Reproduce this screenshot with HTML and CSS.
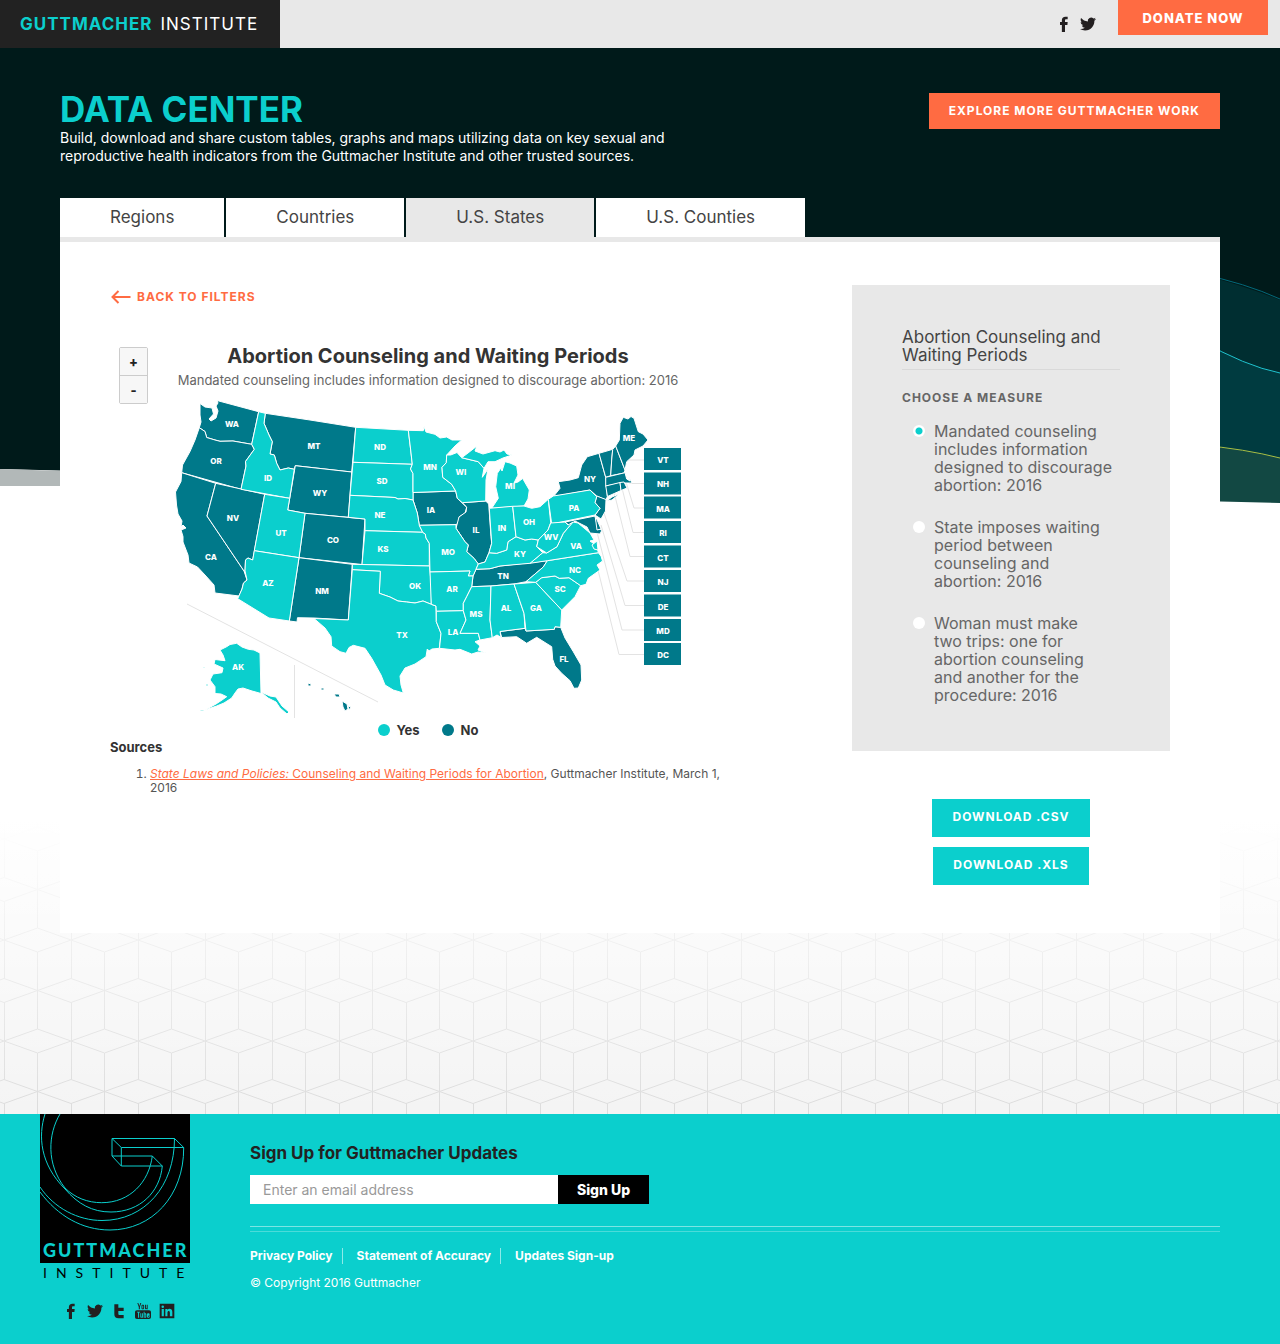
FILE: index.html
```html
<!DOCTYPE html>
<html lang="en">
<head>
<meta charset="utf-8">
<meta name="viewport" content="width=device-width, initial-scale=1">
<title>Data Center | Guttmacher Institute</title>
<link rel="stylesheet" href="styles.css">
</head>
<body>
<svg class="sprite" aria-hidden="true">
  <symbol id="facebook" viewBox="0 0 24 24"><path d="M17.500 1h-3.300C10.800 1 8.800 3 8.800 6.300V9H6v4.500h2.800V24h4.700V13.500h3.600l.4-4.500h-4V6.800c0-1.300.5-1.800 1.700-1.800h2.300z"/></symbol>
  <symbol id="twitter" viewBox="0 0 24 24"><path d="M23.953 4.570a10 10 0 01-2.825.775 4.958 4.958 0 002.163-2.723c-.951.555-2.005.959-3.127 1.184a4.920 4.920 0 00-8.384 4.482C7.690 8.095 4.067 6.130 1.640 3.162a4.822 4.822 0 00-.666 2.475c0 1.710.870 3.213 2.188 4.096a4.904 4.904 0 01-2.228-.616v.060a4.923 4.923 0 003.946 4.827 4.996 4.996 0 01-2.212.085 4.936 4.936 0 004.604 3.417 9.867 9.867 0 01-6.102 2.105c-.390 0-.779-.023-1.170-.067a13.995 13.995 0 007.557 2.209c9.053 0 13.998-7.496 13.998-13.985 0-.210 0-.420-.015-.630A9.935 9.935 0 0024 4.590z"/></symbol>
  <symbol id="tumblr" viewBox="0 0 24 24"><path d="M5 2h6v5h8v5h-8v4c0 1.600.8 2 2.200 2H19v5h-7.500C7 23 5 21 5 17z"/></symbol>
  <symbol id="youtube" viewBox="0 0 24 24"><path d="M5 0l1.500 4.500L8 0h1.500L7.300 6v3.500H5.700V6L3.500 0zM11.700 2.500c1.300 0 2 .8 2 2v3c0 1.300-.7 2-2 2s-2-.7-2-2v-3c0-1.200.7-2 2-2zm0 1.200c-.4 0-.6.300-.6.800v3c0 .5.200.8.6.8s.6-.3.600-.8v-3c0-.5-.2-.8-.6-.8zM15 2.700h1.400v4.800c0 .6.700.5 1.200-.1V2.700H19v6.700h-1.400v-.7c-1.100 1.200-2.600 1-2.600-.7z"/><path fill-rule="evenodd" d="M3 11h18c2 0 3 1 3 3v7c0 2-1 3-3 3H3c-2 0-3-1-3-3v-7c0-2 1-3 3-3zm0 2v1.400h1.600V22h1.500v-7.600h1.600V13zm5 2.500V21c0 1.400 1.500 1.400 2.500.3v.7h1.300v-6.500h-1.300v4.800c-.5.600-1.100.7-1.100 0v-4.800zM13 13v9h1.300v-.6c1.200 1.200 2.700.7 2.700-1.200v-3c0-1.700-1.500-2.300-2.700-1.100V13zm1.400 4.200c.5-.7 1.200-.5 1.200.3v2.700c0 .8-.7 1-1.200.4zM20 15.500c-1.300 0-2 .8-2 2v2.600c0 1.300.7 2 2 2s2-.8 2-2v-.6h-1.300v.7c0 .5-.3.700-.7.700s-.6-.3-.6-.8v-1H22v-1.600c0-1.200-.7-2-2-2z"/></symbol>
  <symbol id="linkedin" viewBox="0 0 24 24"><path fill-rule="evenodd" d="M1 1h22v22H1zm3 8v11h3.300V9zm1.600-5.200a1.900 1.900 0 100 3.800 1.900 1.900 0 000-3.800zM9.500 9v11h3.200v-5.700c0-3.300 3.600-3.300 3.600 0V20H20v-6.500c0-5.300-5.400-6-7.300-3V9z"/></symbol>
</svg>

<header class="topbar">
  <a class="brand" href="#"><strong>GUTTMACHER</strong> INSTITUTE</a>
  <nav class="topbar-actions" aria-label="Social and donations">
    <a class="social" href="#" aria-label="Facebook"><svg><use href="#facebook"/></svg></a>
    <a class="social" href="#" aria-label="Twitter"><svg><use href="#twitter"/></svg></a>
    <a class="donate" href="#">DONATE NOW</a>
  </nav>
</header>

<main class="page">
  <svg class="backdrop" viewBox="0 0 1280 456" preserveAspectRatio="none" aria-hidden="true">
    <path fill="#001a1a" d="M0 0H1280V454L0 421Z"/>
    <path fill="#b2b8b8" d="M0 421L64 423V438H0Z"/>
    <path fill="#002e31" d="M1200 226Q1245 238 1280 252V454L1200 452Z"/>
    <path fill="#003b40" d="M1200 292Q1245 318 1280 325V454L1200 452Z"/>
    <path fill="#124843" d="M1200 397Q1245 402 1280 410V455L1200 453Z"/>
    <path class="wave" stroke="#03697a" d="M1200 226Q1245 235 1280 251"/>
    <path class="wave" stroke="#1fc3cf" d="M1200 292Q1245 318 1280 325"/>
    <path class="wave" stroke="#a9bf45" d="M1200 397Q1245 401 1280 410"/>
  </svg>
  <svg class="lattice" aria-hidden="true">
    <defs>
      <pattern id="cubes" x="4" y="120" width="67" height="101" patternUnits="userSpaceOnUse">
        <path fill="none" stroke="#dcdcdc" d="M0 0L33.500 -12L67 0L33.500 12ZM0 101L33.500 89L67 101M0 38.500L33.500 50.500L0 62.500M67 38.500L33.500 50.500L67 62.500M33.500 12V89M.5 0V38.500M.5 62.500V101"/>
      </pattern>
      <linearGradient id="fade" x2="0" y2="1">
        <stop offset="0" stop-color="#fff"/>
        <stop offset="1" stop-color="#fff" stop-opacity="0"/>
      </linearGradient>
    </defs>
    <rect width="100%" height="100%" fill="#f4f4f4"/>
    <rect width="100%" height="100%" fill="url(#cubes)"/>
    <rect width="100%" height="100%" fill="url(#fade)"/>
  </svg>

  <div class="content">
    <div class="intro">
      <div>
        <h1>DATA CENTER</h1>
        <p>Build, download and share custom tables, graphs and maps utilizing data on key sexual and<br>reproductive health indicators from the Guttmacher Institute and other trusted sources.</p>
      </div>
      <a class="explore" href="#">EXPLORE MORE GUTTMACHER WORK</a>
    </div>

    <nav class="tabs" aria-label="Geography">
      <a href="#">Regions</a>
      <a href="#">Countries</a>
      <a href="#" class="active" aria-current="page">U.S. States</a>
      <a href="#">U.S. Counties</a>
    </nav>

    <div class="card">
      <section class="results">
        <a class="back" href="#"><svg viewBox="0 0 20 14"><path d="M20 7H2M8 1L2 7L8 13"/></svg>BACK TO FILTERS</a>
        <div class="chart">
          <div class="zoom">
            <button type="button" aria-label="Zoom in">+</button>
            <button type="button" aria-label="Zoom out">-</button>
          </div>
          <h2>Abortion Counseling and Waiting Periods</h2>
          <p class="subtitle">Mandated counseling includes information designed to discourage abortion: 2016</p>
          <svg class="map" viewBox="110 395 636 324" role="img" aria-label="Map of U.S. states">
            <g class="guides">
              <path d="M187 604L378 702M294.500 665V718"/>
              <path d="M644 460H612M644 483.500H629M644 508H634L626 482M644 532.500H633L622 488M644 556.500H630L614 492M644 581H627L603 510M644 605.500H625L601 525M644 630H622L596 528M644 654.500H619L590 538"/>
            </g>
            <g class="no">
              <path d="M200 403.500L205 407L212 408L213.500 414L209 419L211 421L216 418L218 411L216 406L218 403L217 400.500L258.700 411.700L251.700 444.300L233 441L220 441.300L215 440L206.700 437.500L205 431.500L199.300 427.700L201 422L200 415Z"/>
              <path d="M199.300 427.700L205 431.500L206.700 437.500L215 440L220 441.300L233 441L251.700 444.300L254.300 449.300L245.500 461.500L246 466L241 489.300L181.700 472.700L182.500 465L190 451.500L195 440Z"/>
              <path d="M181.700 472.700L215.700 483.300L207 516L244 571L247 580L243.500 583L242 589L239 596L215 593L214 585L205 575L197.500 567L189 563L188 555L183 542L183 536.500L181 530L186 528L183 525L181 527L182 521L178 514L176.500 505L175.500 492L181 481.500Z"/>
              <path d="M215.700 483.300L264.700 494.300L252.700 560L248 558L245.500 560L245 571L244 571L207 516Z"/>
              <path d="M265.300 413.300L310 420L355.700 427.300L351.700 472L295.300 465.700L294.300 469.300L288.300 468L280 470L276.700 463.300L274.300 455L270 454L272.300 441.700L269 435L264 423.300Z"/>
              <path d="M295.300 465.700L351.700 472L348.300 517.300L305 513.300L287.700 510Z"/>
              <path d="M305 513.300L365 519L362 564.500L299 557.700Z"/>
              <path d="M299 557.700L352.300 564.300L348.300 620L314 618L297.500 617.700L297 622L289.300 621Z"/>
              <path d="M413 492.500L455.700 491L457.300 498.300L466.700 507.300L465 513.300L459.300 516.700L458.700 522.700L456 524.700L419.300 525.300L417.300 513L413 500Z"/>
              <path d="M462.300 502.700L485.700 501L488.700 504L491 536.700L491.700 543.300L489 552.700L485 562L478.300 564L474 558.300L466.700 551.700L468.300 545L465 541.700L456 528.300L459 517L466 512L466.700 507Z"/>
              <path d="M476 569.300L490 568.700L500 566L547.300 560.700L543.300 567L526 581.700L514 584L491 586L471.700 586.700L473 576Z"/>
              <path d="M500 631.500L525 628.300L526 631L554.300 629.300L555 626.700L560.700 627.300L565 638L573.300 651.700L581 665L581.700 680L578.300 688L574 688.300L570 680.700L561.700 673.300L555 666L552.700 659.300L551.700 646.700L536.700 637.300L526.700 643.300L516.700 636.700L501.700 637.500Z"/>
              <path d="M553.300 496.700L560 488.300L558.300 481.700L570 480L578.300 477.700L581.700 465L587.300 456.700L599 453.300L605.700 477.300L607.300 496.700L606 500L596.700 496L590 490Z"/>
              <path d="M599 453.300L612.700 449.300L611.700 460L610.700 475.700L605.700 477.300Z"/>
              <path d="M612.700 449.300L615.700 446L625 470L624 473L610.700 475.700L611.700 460Z"/>
              <path d="M615.700 446L619.300 440L620 423.300L623.300 417.300L628 419L631 416.500L634 418.300L638.300 431.700L643 434L648 440L643 446L635 450L634 455L626.700 461.700L625 470Z"/>
              <path d="M605.700 477.300L625 472.700L626.700 479L630 481L629 477L632 483L621 483L605.700 486Z"/>
              <path d="M605.700 486L620 482.500L621 490.500L607.500 496.500Z"/>
              <path d="M620 482.500L624 482L627 488L621 490.500Z"/>
              <path d="M596.700 496L606 499.500L605.500 511L601 519L595 515L600 508.300L595 502.700Z"/>
              <path d="M565 522L595 516L598 529L602 530L600 534L590 533L587 527L575 521L570 526Z"/>
              <path d="M595 515L601 529L597 530Z"/>
              <path d="M606.700 501L612 497L619 494L612 500Z"/>
              <path d="M308 683l3 1v2h-3zM321 688h3v2h-3zM334 694h5l1 3h-4zM342 701l5 3 1 5-3 2-2-4zM348 706l3 1-2 3z"/>
            </g>
            <g class="yes">
              <path d="M258.700 411.700L265.300 413.300L264 423.300L269 435L272.300 441.700L270 454L274.300 455L276.700 463.300L280 470L288.300 468L294.300 469.300L289.700 498.300L241 489.300L246 466L245.500 461.500L254.300 449.300L251.700 444.300Z"/>
              <path d="M264.700 494.300L289.700 498.300L287.700 510L305 513.300L299 557.700L254.300 550.700Z"/>
              <path d="M254.300 550.700L299 557.700L289.300 621L269 618L237.700 598.700L242 589L243.500 583L247 580L245 571L245.500 560L248 558L252.700 560Z"/>
              <path d="M355.700 427.300L408.300 430.300L410.700 450L412.300 464.300L353 462.300Z"/>
              <path d="M353 462.300L412.300 464.300L410.500 469L413 473.500V492.500L413 500L405 498.500L398 499L395 497.500L350 495.300Z"/>
              <path d="M350 495.300L395 497.500L398 499L405 498.500L413 500L417.300 513L419.300 525.300L422.700 532.300L365 530.700V519L348.300 517.300Z"/>
              <path d="M365 530.700L422.700 532.300L425.300 534L426 538L429.300 543.300V566L362 564.500Z"/>
              <path d="M352.300 564.300L429.500 566L431.300 585V604.300L423 601L415 603L406.700 602L398 601L390 597L379.300 593.300L380.300 571.300L352.300 569.700Z"/>
              <path d="M352.300 569.700L380.300 571.300L379.300 593.300L390 597L398 601L406.700 602L415 603L423 601L431.300 604.300L436 606L436.300 621.700L441 633.300L439.300 648.300L432 649L429 651L427.300 649L426 656.700L415 664L405 668L400 676L401 685L403.300 693L393.300 690L385 685L381 675L371.700 658.300L365 648.300L353.300 645.300L349 647.500L346 653.300L340 651.700L331.700 646L331 636.700L325 628L314 618.500L348.300 620Z"/>
              <path d="M408.300 430.300L423.300 430.700L424 426.500L426 432L435 434.300L440 438L446.700 437L452 440L461.700 440L455 446L446.700 455L446.300 462.700L442 467.300L442.700 477.300L451.700 484.300L455.700 491L413 492.500V473.500L410.500 469L412.300 464.300L410.700 450Z"/>
              <path d="M446.700 455L450.700 455L457 452.500L461.700 457.700L478.300 461.700L484 468.300L482.300 477.300L488 469L486 480L485.700 501L462.300 502.700L457.300 498.300L455.700 491L451.700 484.300L442.700 477.300L442 467.300L446.300 462.700Z"/>
              <path d="M461.700 457.700L468 453L477 446L475 451L483 454L495 450.700L500 452L504 450L507 454L512 455L503 458L495 461.700L488 461.700L484 468.300L478.300 461.700Z"/>
              <path d="M505 461.700L510 463L516.700 466L518 475L514 483L518 482L522.700 478.500L529.300 490L528 499L524 506L491.700 508.300L498.300 498.300L495.700 486.700L497.300 473.300L501 468L502 471Z"/>
              <path d="M419.300 525.300L456 524.700L456 528.300L465 541.700L468.300 545L466.700 551.700L474 558.300L478.300 564L476 569.300L473 576H468.300L470 571L430 572L429.300 543.300L426 538L425.300 534L422.700 532.300Z"/>
              <path d="M430 572L470 571L468.300 576H473L471.700 586.700L466.700 596.700L463.300 603.300V610.700L436.300 611.300L436 606L431.300 604.300Z"/>
              <path d="M436.300 611.300L463.300 610.700L466 620L460 633.300H478.300L480 640L475 641.700L480 646L478 650L485.700 653L478 652L471.700 654L460 649.300L455 650L439.500 648.300L441 633.300L436.300 621.700Z"/>
              <path d="M471.700 586.700L491 586L490 620L492.300 637.700L480 640L478.300 633.300H460L466 620L463.300 610.700V603.300L466.700 596.700Z"/>
              <path d="M491 586L514 584L524 613.300L525 628.300L500 631.500L501 637.300L497 635L492.300 637.700L490 620Z"/>
              <path d="M514 584L535.700 582.300L561.700 610L560.700 627.300L555 626.700L554.300 629.300L526 631L524 613.300Z"/>
              <path d="M535.700 582.300L541.700 577.700L555 576L559.300 578.300L569 577.700L580.700 585.700L575 596.700L561.700 610Z"/>
              <path d="M526 581.700L543.300 567L547.300 560.700L598.300 552.700L601 556L602.500 561L597 565L600 570L588.300 578.300L586 584.300L580.700 585.700L569 577.700L559.300 578.300L555 576L541.700 577.700L535.700 582.300Z"/>
              <path d="M530 563.300L542.700 552.700L546.700 553L557 546.700L563.300 533.300L573 522L578 523L590 533L594 540L590 541L597 546L598.300 552.700L547.300 560.700Z"/>
              <path d="M478.300 564L485 562L489 552.700L496.700 553.300L506.700 550L508 541.700L516 536.700L525 540L531.700 539L538.300 540L536.700 546.700L542.700 552.700L530 563.300L500 566L490 568.700L476 569.300Z"/>
              <path d="M489.300 508.300L512.700 506.300L516 536.700L508 541.700L506.700 550L496.700 553.300L489 552.700L491.700 543.300Z"/>
              <path d="M512.700 506.300L524 506L531.700 508.300L540 506.700L548.300 499.300L550.700 522.700L548 530L538.300 540L531.700 539L525 540L516 536.700Z"/>
              <path d="M548.300 499.300L553.300 496L590 490L596.700 496.700L595 502.700L600 508.300L595 515L551.700 524Z"/>
              <path d="M550.700 523L565 522L568 525L573 522L563.300 533.300L557 546.700L546.700 553L536.700 546.700L538.300 540L548 530Z"/>
              <path d="M594 549L592 545L597 541L598 550Z"/>
              <path d="M220 650L226.700 646.700L230 644.500L236.700 643.300L242 647L248.300 649.300L254 650L260 653L261 693.500L252 691L243 688L238 689L235 693L231.700 698L224 703L216.700 706L205 710L216 704L222 700L226.700 696.700L221 694L215 693.500V686.700L210 680L213 674L222 672.700L223 668L214 664L215 659.500L225 660.700L223 655Z"/>
              <path d="M261 692L270 696L276 697L282 706L289 712L287 714L280 708L276 702L268 698ZM195 711.500h3v1h-3zM200 710h4v1h-4zM206 684h2v2h-2zM203 667h2v1h-2z"/>
            </g>
            <g class="callouts">
              <path d="M644 448h37v22h-37zM644 472.500h37v22h-37zM644 496.500h37v22h-37zM644 521h37v22h-37zM644 545.500h37v22h-37zM644 570h37v22h-37zM644 594.500h37v22h-37zM644 619h37v22h-37zM644 643h37v22h-37z"/>
            </g>
            <g class="labels">
              <text x="232" y="427">WA</text><text x="216" y="464">OR</text><text x="211" y="560">CA</text><text x="233" y="521">NV</text><text x="268" y="481">ID</text><text x="314" y="449">MT</text><text x="320" y="496">WY</text><text x="281" y="536">UT</text><text x="333" y="543">CO</text><text x="268" y="586">AZ</text><text x="322" y="594">NM</text><text x="380" y="450">ND</text><text x="382" y="484">SD</text><text x="380" y="518">NE</text><text x="383" y="552">KS</text><text x="415" y="589">OK</text><text x="402" y="638">TX</text><text x="430" y="470">MN</text><text x="431" y="513">IA</text><text x="448" y="555">MO</text><text x="452" y="592">AR</text><text x="453" y="635">LA</text><text x="461" y="475">WI</text><text x="476" y="533">IL</text><text x="510" y="489">MI</text><text x="502" y="531">IN</text><text x="529" y="525">OH</text><text x="520" y="557">KY</text><text x="503" y="579">TN</text><text x="476" y="617">MS</text><text x="506" y="611">AL</text><text x="536" y="611">GA</text><text x="560" y="592">SC</text><text x="575" y="573">NC</text><text x="576" y="549">VA</text><text x="551" y="540">WV</text><text x="574" y="511">PA</text><text x="590" y="482">NY</text><text x="629" y="441">ME</text><text x="564" y="662">FL</text><text x="238" y="670">AK</text>
              <text x="663" y="463">VT</text><text x="663" y="487">NH</text><text x="663" y="512">MA</text><text x="663" y="536">RI</text><text x="663" y="561">CT</text><text x="663" y="585">NJ</text><text x="663" y="610">DE</text><text x="663" y="634">MD</text><text x="663" y="658">DC</text>
            </g>
          </svg>
          <ul class="legend"><li class="is-yes">Yes</li><li class="is-no">No</li></ul>
        </div>
        <h3>Sources</h3>
        <ol class="sources">
          <li><a href="#"><em>State Laws and Policies:</em> Counseling and Waiting Periods for Abortion</a>, Guttmacher Institute, March 1, 2016</li>
        </ol>
      </section>

      <aside>
        <form class="measures">
          <h2>Abortion Counseling and<br>Waiting Periods</h2>
          <fieldset>
            <legend>CHOOSE A MEASURE</legend>
            <div class="option"><input type="radio" name="measure" id="m1" checked><label for="m1">Mandated counseling includes information designed to discourage abortion: 2016</label></div>
            <div class="option"><input type="radio" name="measure" id="m2"><label for="m2">State imposes waiting period between counseling and abortion: 2016</label></div>
            <div class="option"><input type="radio" name="measure" id="m3"><label for="m3">Woman must make<br>two trips: one for abortion counseling and another for the procedure: 2016</label></div>
          </fieldset>
        </form>
        <div class="downloads">
          <a href="#">DOWNLOAD .CSV</a>
          <a href="#">DOWNLOAD .XLS</a>
        </div>
      </aside>
    </div>
  </div>
</main>

<footer class="footer">
  <div class="footer-brand">
    <svg class="logo" viewBox="0 0 150 166" role="img" aria-label="Guttmacher Institute">
      <path d="M0 0H150V149H0Z"/>
      <g fill="none" stroke="#0bcfcd">
        <path d="M20 0C8 20 6 50 25 74C35 84 48 88.700 61.700 88.700C90 88.700 109 68 112.300 42M5 0C-2 22 0 50 25 75C38 90 52 98 71 98C100 98 120 78 122.300 52M0 73C14 94 38 106.500 62 106.500C105 106.500 134.500 72 134.500 24.500M0 78C18 102 42 116 70 116C112 116 144 82 143.700 33.500"/>
        <path d="M72 24.500H134.500L143.700 33.500H81.300ZM72 24.500V42H112.300L122.300 52H81.300L72 42M81.300 33.500V52"/>
      </g>
      <text class="logo-name" x="3" y="143">GUTTMACHER</text>
      <text class="logo-sub" x="3" y="164">INSTITUTE</text>
    </svg>
    <nav class="footer-social" aria-label="Social media">
      <a class="social" href="#" aria-label="Facebook"><svg><use href="#facebook"/></svg></a>
      <a class="social" href="#" aria-label="Twitter"><svg><use href="#twitter"/></svg></a>
      <a class="social" href="#" aria-label="Tumblr"><svg><use href="#tumblr"/></svg></a>
      <a class="social" href="#" aria-label="YouTube"><svg><use href="#youtube"/></svg></a>
      <a class="social" href="#" aria-label="LinkedIn"><svg><use href="#linkedin"/></svg></a>
    </nav>
  </div>
  <div class="footer-main">
    <form class="signup">
      <label for="email">Sign Up for Guttmacher Updates</label>
      <div class="signup-row">
        <input type="email" id="email" placeholder="Enter an email address">
        <button type="submit">Sign Up</button>
      </div>
    </form>
    <nav class="footer-links" aria-label="Footer">
      <a href="#">Privacy Policy</a>
      <a href="#">Statement of Accuracy</a>
      <a href="#">Updates Sign-up</a>
    </nav>
    <p>© Copyright 2016 Guttmacher</p>
  </div>
</footer>
</body>
</html>
```
FILE: styles.css
```css
:root {
  --teal: #0bcfcd;
  --deep: #00798a;
  --orange: #ff6b42;
  --grey: #e8e8e8;
}

* { box-sizing: border-box; }

body {
  margin: 0;
  font-family: Inter, "Liberation Sans", sans-serif;
  font-size: 14px;
  line-height: 18px;
  color: #333;
  background: #fff;
}

h1, h2, h3, p, ul, ol, fieldset { margin: 0; padding: 0; border: 0; }
a { color: inherit; text-decoration: none; }
button, input { font: inherit; border-radius: 0; }

.sprite { display: none; }

.social { display: flex; fill: #231f20; }
.social svg { width: 16px; height: 16px; }

/* Top bar */
.topbar {
  display: flex;
  justify-content: space-between;
  height: 48px;
  background: var(--grey);
}
.brand {
  display: flex;
  align-items: center;
  gap: 8px;
  width: 280px;
  padding-left: 20px;
  font-size: 17px;
  letter-spacing: 1px;
  color: #fff;
  background: #222;
}
.brand strong { color: var(--teal); }
.topbar-actions {
  display: flex;
  gap: 8px;
  padding-right: 12px;
}
.topbar-actions .social { align-items: center; }
.donate {
  align-self: flex-start;
  width: 150px;
  margin-left: 14px;
  padding: 9px 0 8px;
  font-size: 13px;
  font-weight: 800;
  letter-spacing: 1px;
  text-align: center;
  color: #fff;
  background: var(--orange);
}

/* Page */
.page {
  position: relative;
  z-index: 0;
  padding-bottom: 181px;
}
.backdrop {
  position: absolute;
  z-index: -1;
  inset: 0 0 auto;
  width: 100%;
  height: 456px;
}
.wave { fill: none; stroke-width: 1; }
.lattice {
  position: absolute;
  z-index: -1;
  inset: auto 0 0;
  width: 100%;
  height: 294px;
}
.content { padding: 45px 60px 0; }

.intro {
  display: flex;
  justify-content: space-between;
  align-items: flex-start;
  height: 105px;
  color: #fff;
}
h1 {
  margin-bottom: 4px;
  font-size: 35px;
  line-height: 32px;
  font-weight: 700;
  color: var(--teal);
}
.explore {
  padding: 9px 20px;
  font-size: 12px;
  font-weight: 700;
  letter-spacing: 1px;
  color: #fff;
  background: var(--orange);
}

.tabs { display: flex; gap: 2px; }
.tabs a {
  padding: 9px 50px 10px;
  font-size: 17px;
  line-height: 20px;
  color: #444;
  background: #fff;
}
.tabs .active { background: var(--grey); }

.card {
  display: grid;
  grid-template-columns: minmax(0, 1fr) 318px;
  gap: 106px;
  padding: 43px 50px 48px;
  border-top: 5px solid var(--grey);
  background: #fff;
}

.back {
  display: flex;
  align-items: center;
  gap: 6px;
  height: 24px;
  font-size: 12px;
  font-weight: 700;
  letter-spacing: 1px;
  color: var(--orange);
}
.back svg {
  width: 21px;
  height: 14px;
  fill: none;
  stroke: currentColor;
  stroke-width: 2;
}

/* Chart */
.chart {
  position: relative;
  margin-top: 34px;
  text-align: center;
}
.chart h2 {
  font-size: 20px;
  line-height: 26px;
}
.subtitle {
  margin-top: 2px;
  font-size: 13px;
  line-height: 18px;
  color: #666;
}
.zoom {
  position: absolute;
  top: 4px;
  left: 9px;
  display: grid;
  border: 1px solid #ccc;
  border-radius: 2px;
}
.zoom button {
  width: 27px;
  height: 27px;
  padding: 0;
  border: 0;
  font-size: 13px;
  font-weight: 800;
  color: #222;
  background: #f7f7f7;
}
.zoom button + button { height: 28px; border-top: 1px solid #ccc; }
.map { display: block; width: 100%; margin-top: 6px; }
.guides { fill: none; stroke: #e3e3e3; }
.yes, .no { stroke: #fff; stroke-width: 1; stroke-linejoin: round; }
.yes { fill: var(--teal); }
.no, .callouts { fill: var(--deep); }
.labels {
  fill: #fff;
  font-size: 8px;
  font-weight: 800;
  text-anchor: middle;
}
.legend {
  display: flex;
  justify-content: center;
  gap: 22px;
  margin-top: 2px;
  list-style: none;
  font-size: 13px;
  font-weight: 700;
}
.legend li { display: flex; align-items: center; gap: 7px; }
.legend li::before {
  content: "";
  width: 12px;
  height: 12px;
  border-radius: 50%;
  background: var(--teal);
}
.legend .is-no::before { background: var(--deep); }

h3 { font-size: 13px; line-height: 16px; }
.sources {
  margin-top: 12px;
  padding-left: 40px;
  font-size: 12px;
  line-height: 14px;
  color: #555;
}
.sources a { color: var(--orange); text-decoration: underline; }

/* Sidebar */
.measures {
  min-height: 466px;
  padding: 43px 50px;
  background: var(--grey);
}
.measures h2 {
  padding-bottom: 5px;
  border-bottom: 1px solid #d9d9d9;
  font-size: 17px;
  font-weight: 400;
  color: #444;
}
legend {
  padding: 19px 0 16px;
  font-size: 12px;
  line-height: 17px;
  font-weight: 700;
  letter-spacing: 1px;
  color: #666;
}
.option {
  display: flex;
  align-items: flex-start;
  gap: 9px;
  padding: 0 6px 0 11px;
  font-size: 16px;
  color: #666;
}
.option + .option { margin-top: 24px; }
.option input {
  flex: none;
  appearance: none;
  width: 12px;
  height: 12px;
  margin: 3px 0;
  border-radius: 50%;
  background: #fff;
}
.option input:checked { background: radial-gradient(circle, var(--teal) 3px, #fff 4px); }
.downloads {
  display: flex;
  flex-direction: column;
  align-items: center;
  gap: 10px;
  margin-top: 48px;
}
.downloads a {
  padding: 9px 20px 11px;
  font-size: 12px;
  font-weight: 700;
  letter-spacing: 1px;
  color: #fff;
  background: var(--teal);
}

/* Footer */
.footer {
  display: flex;
  gap: 60px;
  padding: 0 60px 25px 40px;
  background: var(--teal);
}
.footer-brand { flex: none; width: 150px; }
.logo { display: block; width: 150px; height: 166px; overflow: visible; }
.logo-name {
  fill: var(--teal);
  font: 900 18px Lato, sans-serif;
  letter-spacing: 2px;
}
.logo-sub {
  font: 400 14px Lato, sans-serif;
  letter-spacing: 9px;
}
.footer-social {
  display: flex;
  justify-content: center;
  gap: 8px;
  margin-top: 23px;
  padding-left: 8px;
}
.footer-main { flex: 1; padding-top: 29px; color: #fff; }
.signup {
  padding-bottom: 22px;
  border-bottom: 1px solid #7ce5e4;
}
.signup label {
  display: block;
  font-size: 17px;
  line-height: 20px;
  font-weight: 700;
  color: #222;
}
.signup-row { display: flex; height: 29px; margin-top: 12px; }
.signup input {
  width: 308px;
  padding: 0 13px;
  border: 0;
  background: #fff;
}
.signup input::placeholder { color: #999; }
.signup button {
  width: 91px;
  padding: 0;
  border: 0;
  font-weight: 800;
  color: #fff;
  background: #000;
}
.footer-links {
  display: flex;
  margin-top: 4px;
  padding-top: 16px;
  border-top: 1px solid #4cdbd9;
  font-size: 12px;
  line-height: 16px;
  font-weight: 700;
}
.footer-links a + a {
  margin-left: 9px;
  padding-left: 14px;
  border-left: 1px solid #8deae9;
}
.footer-main p { margin-top: 10px; font-size: 12px; }
```
